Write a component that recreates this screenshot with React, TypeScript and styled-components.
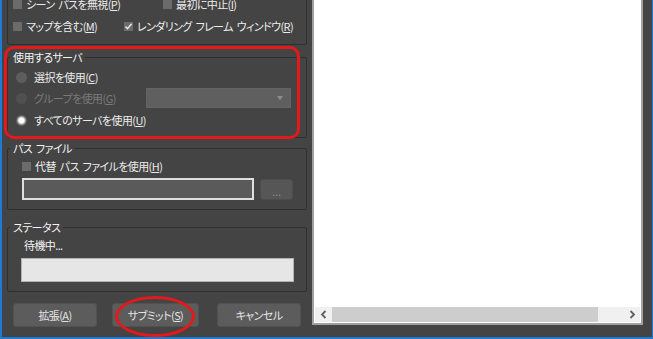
import React from "react";
import styled, { createGlobalStyle } from "styled-components";

const GlobalStyle = createGlobalStyle`
  html, body {
    margin: 0;
    padding: 0;
    background: #444444;
  }
  body {
    font-family: "Noto Sans CJK JP", "Noto Sans", sans-serif;
  }
`;

const ACCENT = "#1f7ad3";
const RED = "#e3191b";

const Window = styled.div`
  width: 653px;
  height: 339px;
  box-sizing: border-box;
  display: flex;
  overflow: hidden;
  background: #444444;
  border-left: 2px solid ${ACCENT};
  border-right: 1px solid ${ACCENT};
  border-bottom: 2px solid ${ACCENT};
  color: #ececec;
  font-size: 11px;
  font-feature-settings: "palt" 1;
  letter-spacing: -0.6px;
  word-spacing: 2px;
`;

const LeftPane = styled.div`
  width: 308px;
  flex-shrink: 0;
  box-sizing: border-box;
  padding-left: 5px;
  display: flex;
  flex-direction: column;
`;

// top options box, its upper part is scrolled out of view
const OptionsBox = styled.div`
  width: 300px;
  box-sizing: border-box;
  margin-top: -12px;
  border: 1px solid #2f2f2f;
  border-radius: 2px;
  padding: 4px 0 7px 5px;
`;

const Row = styled.div<{ $h?: number; $mt?: number }>`
  display: flex;
  align-items: center;
  height: ${(p) => p.$h ?? 22}px;
  margin-top: ${(p) => p.$mt ?? 0}px;
`;

const Option = styled.label<{ $w?: number; $disabled?: boolean }>`
  display: flex;
  align-items: center;
  gap: 4px;
  width: ${(p) => (p.$w ? `${p.$w}px` : "auto")};
  flex-shrink: 0;
  line-height: 14px;
  white-space: nowrap;
  color: ${(p) => (p.$disabled ? "#7a7a7a" : "#ececec")};
`;

const CheckBox = styled.span`
  width: 9px;
  height: 9px;
  flex-shrink: 0;
  background: #6b6b6b;
  display: flex;
  align-items: center;
  justify-content: center;
`;

const Highlighted = styled.div<{ $mt: number }>`
  position: relative;
  margin-top: ${(p) => p.$mt}px;
`;

const Group = styled.fieldset<{ $mt?: number }>`
  width: 300px;
  box-sizing: border-box;
  min-width: 0;
  margin: ${(p) => p.$mt ?? 0}px 0 0;
  padding: 0;
  border: 1px solid #2f2f2f;
  border-radius: 2px;
`;

const Legend = styled.legend`
  margin-left: 2px;
  padding: 0 3px;
  line-height: 14px;
  font-size: 11px;
  color: #f4f4f4;
`;

const GroupBody = styled.div<{ $pt: number; $pl: number; $pb: number }>`
  display: flex;
  flex-direction: column;
  padding: ${(p) => `${p.$pt}px 0 ${p.$pb}px ${p.$pl}px`};
`;

const Radio = styled.span<{ $checked?: boolean; $disabled?: boolean }>`
  width: 11px;
  height: 11px;
  border-radius: 50%;
  flex-shrink: 0;
  background: ${(p) =>
    p.$checked
      ? "radial-gradient(circle, #ffffff 0 2.5px, #d0d0d0 3.2px, #8a8a8a 4.2px, #5d5d5d 5.2px)"
      : p.$disabled
      ? "#505050"
      : "#5d5d5d"};
`;

const RadioOption = styled(Option)`
  gap: 7px;
`;

const Combo = styled.div`
  width: 145px;
  height: 20px;
  box-sizing: border-box;
  background: #5f5f5f;
  border: 1px solid #636363;
  display: flex;
  align-items: center;
  justify-content: flex-end;
  padding-right: 7px;
`;

const ComboArrow = styled.span`
  width: 0;
  height: 0;
  border-left: 3px solid transparent;
  border-right: 3px solid transparent;
  border-top: 4px solid #8c8c8c;
`;

const HighlightBox = styled.div`
  position: absolute;
  left: -3px;
  top: -4px;
  width: 296px;
  height: 93px;
  box-sizing: border-box;
  border: 3px solid ${RED};
  border-radius: 10px;
  pointer-events: none;
`;

const PathInput = styled.div`
  width: 232px;
  height: 22px;
  box-sizing: border-box;
  background: #5a5a5a;
  border: 2px solid #dedede;
`;

const BrowseButton = styled.div`
  width: 33px;
  height: 21px;
  margin-left: 6px;
  box-sizing: border-box;
  background: #565656;
  border: 1px solid #4d4d4d;
  border-radius: 3px;
  color: #8a8a8a;
  display: flex;
  align-items: center;
  justify-content: center;
  line-height: 10px;
  padding-top: 3px;
  letter-spacing: 0;
`;

const StatusText = styled.div`
  height: 18px;
  line-height: 18px;
  margin-left: 3px;
  color: #f4f4f4;
`;

const Progress = styled.div`
  width: 273px;
  height: 24px;
  margin-top: 4px;
  box-sizing: border-box;
  background: #e6e6e6;
  border: 1px solid #b3b3b3;
`;

const ButtonRow = styled.div`
  display: flex;
  margin-top: 11px;
  padding-left: 6px;
`;

const Button = styled.div<{ $w: number; $ml?: number }>`
  position: relative;
  width: ${(p) => p.$w}px;
  height: 24px;
  margin-left: ${(p) => p.$ml ?? 0}px;
  box-sizing: border-box;
  background: #5c5c5c;
  border: 1px solid #515151;
  border-radius: 3px;
  color: #e4e4e4;
  display: flex;
  align-items: center;
  justify-content: center;
  line-height: 14px;
`;

const HighlightEllipse = styled.div`
  position: absolute;
  left: 2px;
  top: -8px;
  width: 80px;
  height: 41px;
  box-sizing: border-box;
  border: 3px solid ${RED};
  border-radius: 50%;
  pointer-events: none;
`;

const RightPane = styled.div`
  flex: 1;
  box-sizing: border-box;
  padding: 0 9px 0 2px;
  display: flex;
`;

const Preview = styled.div`
  flex: 1;
  margin-top: -4px;
  height: 329px;
  box-sizing: border-box;
  background: #ffffff;
  border: 2px solid #a0a0a0;
  padding: 1px;
  display: flex;
  flex-direction: column;
  justify-content: flex-end;
`;

const ScrollBar = styled.div`
  height: 15px;
  display: flex;
  background: #f0f0f0;
`;

const ScrollArrow = styled.div`
  width: 17px;
  display: flex;
  align-items: center;
  justify-content: center;
`;

const ScrollThumb = styled.div`
  width: 266px;
  background: #cdcdcd;
`;

const ScrollTrack = styled.div`
  flex: 1;
`;

const Check = () => (
  <svg width="9" height="9" viewBox="0 0 9 9">
    <polyline points="1.5,4.5 3.5,6.7 7.6,1.8" fill="none" stroke="#e8e8e8" strokeWidth="1.5" />
  </svg>
);

const Chevron = ({ dir }: { dir: "left" | "right" }) => (
  <svg width="8" height="9" viewBox="0 0 8 9">
    <polyline
      points={dir === "left" ? "5.5,1 2,4.5 5.5,8" : "2.5,1 6,4.5 2.5,8"}
      fill="none"
      stroke="#606060"
      strokeWidth="1.8"
    />
  </svg>
);

export default function App() {
  return (
    <>
      <GlobalStyle />
      <Window>
        <LeftPane>
          <OptionsBox>
            <Row>
              <Option $w={150}>
                <CheckBox />
                <span>シーン パスを無視(<u>P</u>)</span>
              </Option>
              <Option>
                <CheckBox />
                <span>最初に中止(<u>I</u>)</span>
              </Option>
            </Row>
            <Row>
              <Option $w={111}>
                <CheckBox />
                <span>マップを含む(<u>M</u>)</span>
              </Option>
              <Option>
                <CheckBox>
                  <Check />
                </CheckBox>
                <span>レンダリング フレーム ウィンドウ(<u>R</u>)</span>
              </Option>
            </Row>
          </OptionsBox>

          <Highlighted $mt={5}>
            <Group>
              <Legend>使用するサーバ</Legend>
              <GroupBody $pt={3} $pl={8} $pb={6}>
                <Row $h={20}>
                  <RadioOption>
                    <Radio />
                    <span>選択を使用(<u>C</u>)</span>
                  </RadioOption>
                </Row>
                <Row $h={20} $mt={1}>
                  <RadioOption $w={130} $disabled>
                    <Radio $disabled />
                    <span>グループを使用(<u>G</u>)</span>
                  </RadioOption>
                  <Combo>
                    <ComboArrow />
                  </Combo>
                </Row>
                <Row $h={22} $mt={1}>
                  <RadioOption>
                    <Radio $checked />
                    <span>すべてのサーバを使用(<u>U</u>)</span>
                  </RadioOption>
                </Row>
              </GroupBody>
            </Group>
            <HighlightBox />
          </Highlighted>

          <Group $mt={3}>
            <Legend>パス ファイル</Legend>
            <GroupBody $pt={2} $pl={14} $pb={9}>
              <Row $h={18}>
                <Option>
                  <CheckBox />
                  <span>代替 パス ファイルを使用(<u>H</u>)</span>
                </Option>
              </Row>
              <Row $h={22} $mt={3}>
                <PathInput />
                <BrowseButton>...</BrowseButton>
              </Row>
            </GroupBody>
          </Group>

          <Group $mt={10}>
            <Legend>ステータス</Legend>
            <GroupBody $pt={2} $pl={13} $pb={9}>
              <StatusText>待機中...</StatusText>
              <Progress />
            </GroupBody>
          </Group>

          <ButtonRow>
            <Button $w={84}>
              拡張(<u>A</u>)
            </Button>
            <Button $w={87} $ml={15}>
              サブミット(<u>S</u>)
              <HighlightEllipse />
            </Button>
            <Button $w={84} $ml={18}>
              キャンセル
            </Button>
          </ButtonRow>
        </LeftPane>

        <RightPane>
          <Preview>
            <ScrollBar>
              <ScrollArrow>
                <Chevron dir="left" />
              </ScrollArrow>
              <ScrollThumb />
              <ScrollTrack />
              <ScrollArrow>
                <Chevron dir="right" />
              </ScrollArrow>
            </ScrollBar>
          </Preview>
        </RightPane>
      </Window>
    </>
  );
}
